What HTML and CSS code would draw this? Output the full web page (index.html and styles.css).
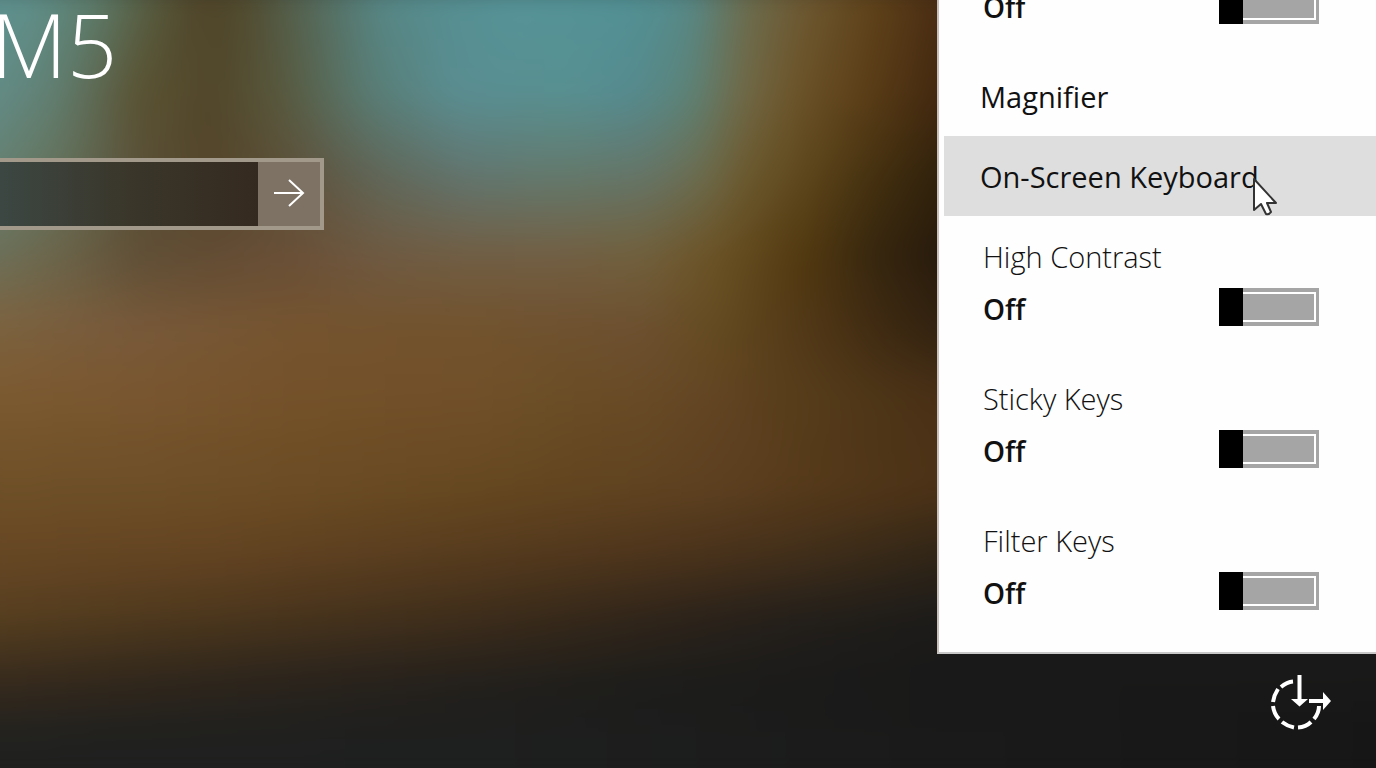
FILE: index.html
```html
<!DOCTYPE html>
<html lang="en">
<head>
<meta charset="utf-8">
<title>Sign in</title>
<link rel="stylesheet" href="styles.css">
</head>
<body>
<div class="screen">
  <div class="backdrop" aria-hidden="true">
    <div class="band band-1"></div>
    <div class="band band-2"></div>
    <div class="band band-3"></div>
    <div class="band band-4"></div>
    <div class="band band-5"></div>
    <div class="band band-6"></div>
    <div class="band band-7"></div>
    <div class="band band-8"></div>
    <div class="band band-9"></div>
    <div class="band band-10"></div>
    <div class="band band-11"></div>
  </div>
  <div class="content">
    <main class="login">
      <h1 class="user">M5</h1>
      <form class="password">
        <input class="password-input" type="password" aria-label="Password">
        <button class="submit" type="button" aria-label="Submit">
          <svg width="32" height="30" viewBox="0 0 32 30" fill="none" stroke="#fff" stroke-width="2"><path d="M1 14H30M16 1L30 14L16 27"/></svg>
        </button>
      </form>
    </main>
    <aside class="side">
      <section class="menu" aria-label="Ease of Access">
        <div class="setting-row setting-row-first">
          <span class="state">Off</span>
          <input class="toggle" type="checkbox" role="switch" aria-label="Narrator">
        </div>
        <button class="item" type="button">Magnifier</button>
        <button class="item item-hover" type="button">On-Screen Keyboard
          <svg class="cursor" width="26" height="40" viewBox="0 0 26 40"><path d="M2 2V33L9 27L14 37Q17 38 19 35L15 26H24Z" fill="#fff" stroke="#333" stroke-width="2" stroke-linejoin="round"/></svg>
        </button>
        <div class="setting">
          <label class="name" for="contrast">High Contrast</label>
          <div class="setting-row"><span class="state">Off</span><input class="toggle" id="contrast" type="checkbox" role="switch"></div>
        </div>
        <div class="setting">
          <label class="name" for="sticky">Sticky Keys</label>
          <div class="setting-row"><span class="state">Off</span><input class="toggle" id="sticky" type="checkbox" role="switch"></div>
        </div>
        <div class="setting">
          <label class="name" for="filter">Filter Keys</label>
          <div class="setting-row"><span class="state">Off</span><input class="toggle" id="filter" type="checkbox" role="switch"></div>
        </div>
      </section>
      <button class="access" type="button" aria-label="Ease of Access">
        <svg width="64" height="56" viewBox="0 0 64 56" fill="none" stroke="#fff" stroke-width="4">
          <path d="M23 7.500Q17 8 11 13M8 15Q4 21 3 28M3 32Q4 40 9 45M12 48Q17 52 24 53.500M28 53.500Q36 53 41 48M44 45Q49 39 49 32"/>
          <path d="M29.500 1V27M39 27H55"/>
          <path d="M21 25L29.500 32.500L38 25ZM53 18L61 27L53 36Z" fill="#fff" stroke="none"/>
        </svg>
      </button>
    </aside>
  </div>
</div>
</body>
</html>
```
FILE: styles.css
```css
* { box-sizing: border-box; }

body {
  margin: 0;
  background: #1b1b1b;
  font-family: "Open Sans", "Noto Sans", sans-serif;
}

.screen {
  display: grid;
  min-height: 100vh;
  overflow: hidden;
}

.backdrop,
.content { grid-area: 1 / 1; min-width: 0; }

/* The wallpaper: colour bands that fade into one another from top to bottom. */
.backdrop {
  display: grid;
  filter: blur(14px);
  transform: scale(1.05);
}
.band {
  grid-area: 1 / 1;
  mask-image: linear-gradient(transparent var(--from), #000 var(--to));
}
.band-1 { mask-image: none; background: linear-gradient(90deg, #5c9394 0, #5f9390 4%, #5d8070 9%, #565c40 13%, #50452a 16%, #50492c 19%, #556a5c 24%, #568a8a 29%, #559499 38%, #529296 46%, #558b8d 50%, #6b6e50 54%, #6e5a34 58%, #60431a 63%, #4a2c14 68%); }
.band-2 { --from: 0%; --to: 14%; background: linear-gradient(90deg, #649290 0, #617f72 6%, #5a5232 12%, #52462a 17%, #58593e 22%, #597c74 28%, #5a8e92 34%, #589091 42%, #558b90 46%, #5c8378 50%, #716845 54%, #6b5126 58%, #583b16 63%, #40260f 68%); }
.band-3 { --from: 14%; --to: 24%; background: linear-gradient(90deg, #65877d 0, #65735c 6%, #5a5038 12%, #544529 17%, #5e523c 23%, #60685a 29%, #627670 35%, #637a6d 41%, #657568 47%, #6c6c4e 51%, #6c592e 54%, #5f471c 58%, #44300f 63%, #2e200c 68%); }
.band-4 { --from: 24%; --to: 34%; background: linear-gradient(90deg, #6d7560 0, #6b664c 6%, #5f4f36 12%, #624c34 17%, #6a5038 23%, #6f5a42 29%, #715e44 35%, #725f44 41%, #71603c 47%, #6b5124 52%, #51380f 58%, #36260f 63%, #26190c 68%); }
.band-5 { --from: 34%; --to: 43%; background: linear-gradient(90deg, #7d6440 0, #78593a 12%, #75542f 23%, #72532e 35%, #6d5030 47%, #644b20 52%, #523817 58%, #402b12 63%, #302110 68%); }
.band-6 { --from: 43%; --to: 52%; background: linear-gradient(90deg, #7c5a30 0, #79562f 12%, #745129 23%, #715029 35%, #6b4e26 41%, #684a26 47%, #624423 52%, #573d1a 58%, #4e3618 63%, #4a3016 68%); }
.band-7 { --from: 52%; --to: 63%; background: linear-gradient(90deg, #6e5027 0, #6d4f27 12%, #6b4c24 23%, #664820 35%, #604320 47%, #5d4020 52%, #563a1a 58%, #513619 63%, #4c3216 68%); }
.band-8 { --from: 63%; --to: 71%; background: linear-gradient(90deg, #684825 0, #644422 17%, #573c1e 35%, #4e351c 47%, #49321b 52%, #422f1a 58%, #392a18 63%, #302517 68%); }
.band-9 { --from: 71%; --to: 79%; background: linear-gradient(90deg, #584020 0, #4c371d 17%, #3e2d1b 35%, #37291a 41%, #30251a 47%, #2a221a 52%, #231f1a 58%, #1c1b1a 68%); }
.band-10 { --from: 79%; --to: 87%; background: linear-gradient(90deg, #382b1d 0, #2d251c 17%, #23201c 35%, #1d1d1b 47%, #191919 68%); }
.band-11 { --from: 87%; --to: 94%; background: linear-gradient(90deg, #20211f 0, #1e1f1f 35%, #1b1b1b 60%, #161616 100%); }

.content {
  position: relative;
  display: grid;
  grid-template-columns: minmax(0, 1fr) 439px;
}

.login { min-width: 0; }

.user {
  margin: 0 0 0 -9px;
  padding-bottom: 70px;
  color: #fff;
  font-size: 88px;
  font-weight: 300;
  line-height: 88px;
}

.password {
  display: flex;
  width: 324px;
  height: 72px;
  border: 4px solid #a3998a;
  border-left: 0;
}
.password-input {
  flex: 1;
  min-width: 0;
  padding: 0 16px;
  border: 0;
  background: linear-gradient(90deg, #3c4743, #3a362a 50%, #352a20);
  color: #fff;
  font: inherit;
  font-size: 28px;
}
.submit {
  display: flex;
  align-items: center;
  justify-content: center;
  width: 62px;
  padding: 0;
  border: 0;
  background: #7e7264;
}

.side {
  display: flex;
  flex-direction: column;
  align-items: flex-start;
}

.menu {
  width: 100%;
  margin-top: -14px;
  padding-bottom: 10px;
  border-bottom: 2px solid #c8c8c8;
  border-left: 2px solid #c8c0b8;
  background: #fefefe;
  color: #111;
}

.item {
  position: relative;
  display: block;
  width: calc(100% - 5px);
  height: 80px;
  margin-left: 5px;
  padding: 0 0 0 36px;
  border: 0;
  background: none;
  color: #111;
  font: inherit;
  font-size: 29px;
  text-align: left;
}
.item-hover { background: #dedede; }
.cursor {
  position: absolute;
  top: 41px;
  left: 308px;
}

.setting { height: 142px; padding-top: 22px; }
.name {
  display: block;
  padding: 0 44px;
  font-size: 29px;
  font-weight: 300;
  line-height: 38px;
}
.setting-row {
  display: flex;
  align-items: flex-start;
  justify-content: space-between;
  margin-top: 12px;
  padding: 0 57px 0 44px;
}
.setting-row-first { margin: 0 0 28px; }
.state { font-size: 28px; font-weight: 600; line-height: 42px; }

.toggle {
  appearance: none;
  width: 100px;
  height: 38px;
  margin: 0;
  background:
    linear-gradient(#000, #000) 0 0 / 24px 38px no-repeat,
    linear-gradient(#a5a5a5, #a5a5a5) 24px 6px / 71px 26px no-repeat,
    linear-gradient(#fff, #fff) 24px 4px / 73px 30px no-repeat,
    #a5a5a5;
}

.access {
  align-self: flex-end;
  margin: 20px 42px 0 0;
  padding: 0;
  border: 0;
  background: none;
}
.access svg, .submit svg { display: block; }
```
